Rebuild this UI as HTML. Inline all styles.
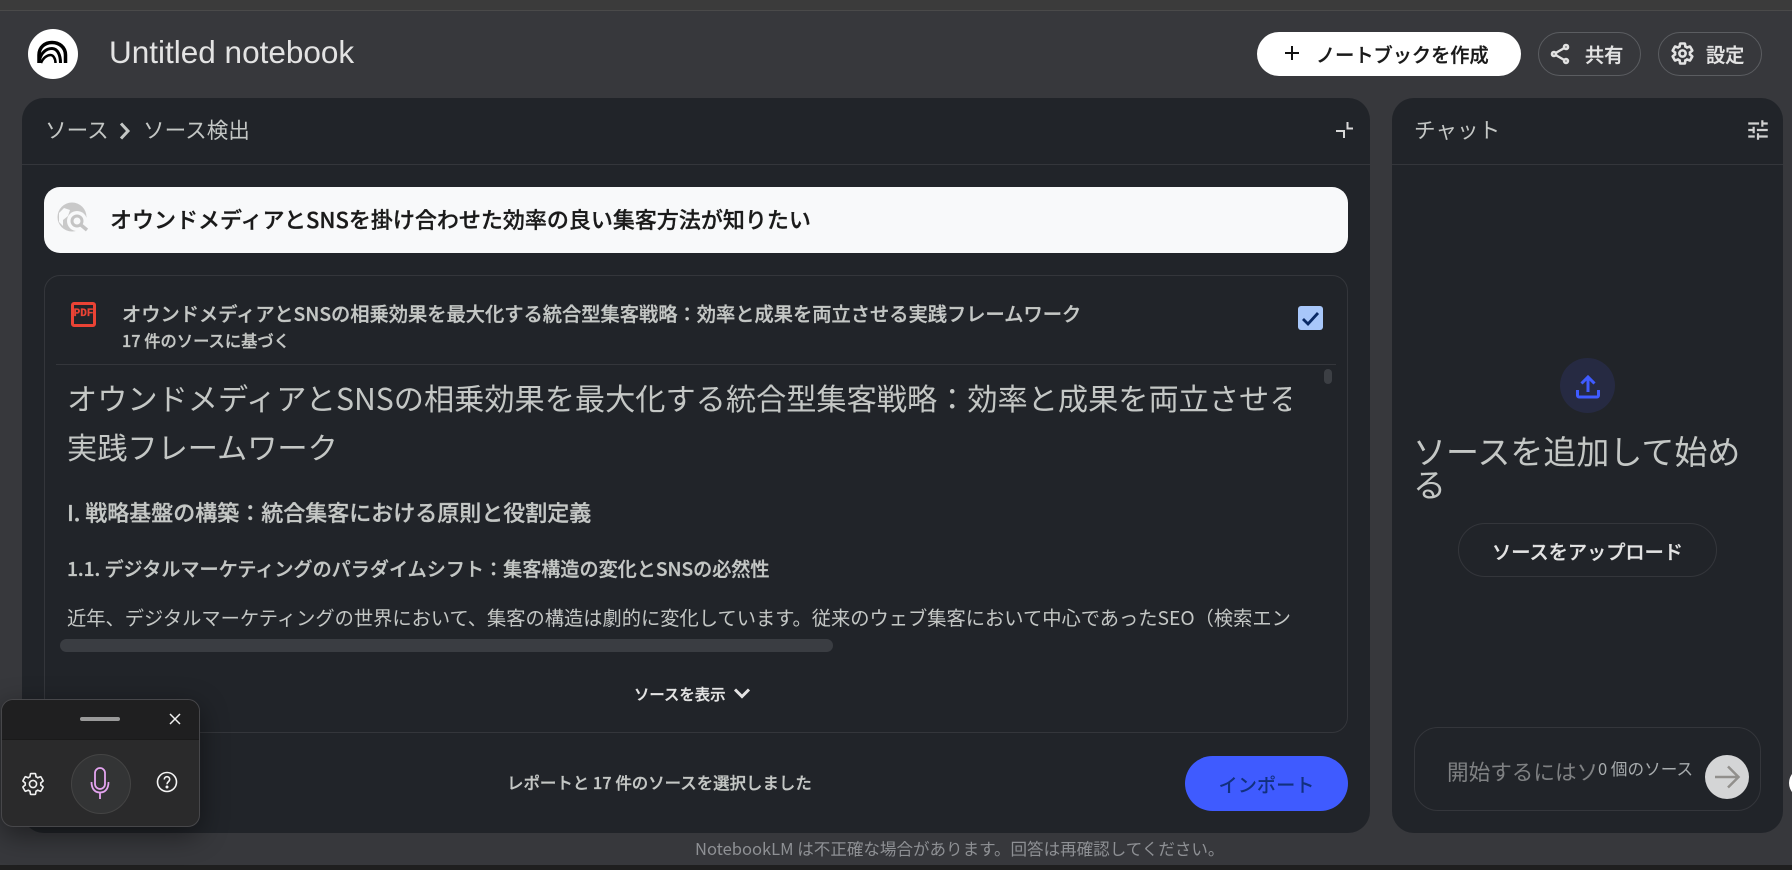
<!DOCTYPE html>
<html lang="ja"><head><meta charset="utf-8"><title>NotebookLM</title>
<style>
*{box-sizing:border-box}
html,body{margin:0;padding:0;width:1792px;height:870px;overflow:hidden;background:#37383c}
body{position:relative;font-family:"Noto Sans CJK JP","Liberation Sans",sans-serif;color:#c4c7c5}
.a{position:absolute;white-space:nowrap}
.m{-webkit-text-stroke:.3px currentColor}
svg{position:absolute;display:block}
.panel{position:absolute;background:#212429;border-radius:22px}
.line{position:absolute;height:1px;background:#34363b}
</style></head><body>
<div class="a" style="left:0;top:0;width:1792px;height:10px;background:#3b3b3b"></div>
<div class="a" style="left:0;top:10px;width:1792px;height:1px;background:#4a4a4a"></div>
<div class="a" style="left:0;top:865px;width:1792px;height:5px;background:#1f1f1f"></div>

<!-- logo -->
<div class="a" style="left:28px;top:29px;width:50px;height:50px;border-radius:50%;background:#fff"></div>
<svg style="left:0;top:0" width="100" height="100" fill="none" stroke="#000"><path d="M39 63V55C39 47 45 42.500 52 42.500S65.500 47 65.500 55V63" stroke-width="3.500"/><path d="M39.500 60C41 53 46 48.500 52 48.500C57.500 48.500 60.500 55 60.500 63" stroke-width="3"/><path d="M41 63C43 58 47 55 50.500 55C53.500 55 55.500 59 55.500 63" stroke-width="2.500"/></svg>
<div class="a" style="left:109px;top:32px;font-family:'Liberation Sans',sans-serif;font-size:31.500px;line-height:40px;color:#e3e3e3">Untitled notebook</div>

<!-- header buttons -->
<div class="a" style="left:1257px;top:32px;width:264px;height:44px;border-radius:22px;background:#fff"></div>
<svg style="left:1283px;top:44px" width="18" height="18" stroke="#111" stroke-width="2"><path d="M9 2V16M2 9H16"/></svg>
<div class="a m" style="left:1316px;top:41px;font-size:19.200px;line-height:27px;font-weight:500;color:#1a1a1a">ノートブックを作成</div>
<div class="a" style="left:1538px;top:32px;width:103px;height:44px;border-radius:22px;border:1px solid #5b5d61"></div>
<svg style="left:1548px;top:42px" width="24" height="24" viewBox="0 0 24 24" fill="#e3e3e3" stroke="#e3e3e3" stroke-width=".6"><path d="M18 16.080c-.76 0-1.440.3-1.960.77L8.910 12.700c.05-.23.09-.46.09-.7s-.04-.47-.09-.7l7.050-4.110c.54.5 1.250.81 2.040.81 1.660 0 3-1.340 3-3s-1.340-3-3-3-3 1.340-3 3c0 .24.04.47.09.7L8.040 9.810C7.500 9.310 6.790 9 6 9c-1.660 0-3 1.340-3 3s1.340 3 3 3c.79 0 1.500-.31 2.040-.81l7.120 4.160c-.05.21-.08.43-.08.65 0 1.610 1.310 2.920 2.920 2.920 1.610 0 2.920-1.310 2.920-2.920s-1.310-2.920-2.920-2.920zM18 4c.55 0 1 .45 1 1s-.45 1-1 1-1-.45-1-1 .45-1 1-1zM6 13c-.55 0-1-.45-1-1s.45-1 1-1 1 .45 1 1-.45 1-1 1zm12 7.020c-.55 0-1-.45-1-1s.45-1 1-1 1 .45 1 1-.45 1-1 1z"/></svg>
<div class="a m" style="left:1585px;top:40px;font-size:19.200px;line-height:28px;font-weight:500;color:#e3e3e3">共有</div>
<div class="a" style="left:1658px;top:32px;width:104px;height:44px;border-radius:22px;border:1px solid #5b5d61"></div>
<svg style="left:1670px;top:41px" width="25" height="25" viewBox="0 0 24 24" fill="none" stroke="#e3e3e3" stroke-width="2.500"><path d="M19.140 12.940c.04-.3.06-.61.06-.94 0-.32-.02-.64-.07-.94l2.030-1.580c.18-.14.23-.41.12-.61l-1.920-3.320c-.12-.22-.37-.29-.59-.22l-2.390.96c-.5-.38-1.030-.7-1.620-.94l-.36-2.540c-.04-.24-.24-.41-.48-.41h-3.840c-.24 0-.43.17-.47.41l-.36 2.540c-.59.24-1.130.57-1.620.94l-2.390-.96c-.22-.08-.47 0-.59.22L2.740 8.870c-.12.21-.08.47.12.61l2.030 1.580c-.05.3-.09.63-.09.94s.02.64.07.94l-2.030 1.580c-.18.14-.23.41-.12.61l1.920 3.320c.12.22.37.29.59.22l2.390-.96c.5.38 1.030.7 1.620.94l.36 2.540c.05.24.24.41.48.41h3.840c.24 0 .44-.17.47-.41l.36-2.540c.59-.24 1.130-.56 1.620-.94l2.390.96c.22.08.47 0 .59-.22l1.920-3.320c.12-.22.07-.47-.12-.61l-2.010-1.580z"/><circle cx="12" cy="12" r="3"/></svg>
<div class="a m" style="left:1706px;top:40px;font-size:19.200px;line-height:28px;font-weight:500;color:#e3e3e3">設定</div>

<!-- left panel -->
<div class="panel" style="left:22px;top:98px;width:1348px;height:735px"></div>
<div class="line" style="left:22px;top:164px;width:1348px"></div>
<div class="a" style="left:45px;top:115px;font-size:21.600px;line-height:30px">ソース</div>
<svg style="left:117px;top:120px" width="18" height="22" fill="none" stroke="#c4c7c5" stroke-width="3"><path d="M4 3.500L11 11L4 18.500"/></svg>
<div class="a" style="left:143px;top:115px;font-size:21.600px;line-height:30px">ソース検出</div>
<svg style="left:1334px;top:120px" width="22" height="20" fill="none" stroke="#d9d9d9" stroke-width="2"><path d="M13.500 2V8.500H19M2 11H10V18"/></svg>

<!-- search bar -->
<div class="a" style="left:44px;top:187px;width:1304px;height:66px;border-radius:16px;background:#f8f9fa"></div>
<svg style="left:50px;top:195px" width="42" height="42"><circle cx="22" cy="22" r="14.500" fill="#c9c9c9"/><path d="M9 18L14 13L20 15L18 21L13 25L13 31L9 27Z" fill="#f8f9fa"/><circle cx="27" cy="26" r="10" fill="#f8f9fa"/><circle cx="27" cy="26" r="5" fill="none" stroke="#c4c4c4" stroke-width="3"/><path d="M31 30L37 35" stroke="#c4c4c4" stroke-width="3.500"/></svg>
<div class="a m" style="left:110px;top:203px;font-size:22px;line-height:32px;font-weight:500;color:#1a1a1a">オウンドメディアとSNSを掛け合わせた効率の良い集客方法が知りたい</div>

<!-- card -->
<div class="a" style="left:44px;top:275px;width:1304px;height:458px;border-radius:16px;border:1px solid #34363b"></div>
<div class="a" style="left:71px;top:302px;width:25px;height:25px;border:3px solid #ea4335;border-radius:3px"></div>
<div class="a m" style="left:71px;top:302px;width:25px;height:25px;font-family:'Liberation Mono',monospace;font-size:11px;line-height:25px;font-weight:700;text-align:center;color:#ea4335">PDF</div>
<div class="a m" style="left:122px;top:299px;font-size:19.250px;line-height:28px;font-weight:500;color:#c4c7c5">オウンドメディアとSNSの相乗効果を最大化する統合型集客戦略：効率と成果を両立させる実践フレームワーク</div>
<div class="a m" style="left:122px;top:328px;font-size:16.300px;line-height:24px;font-weight:500;color:#c4c7c5">17 件のソースに基づく</div>
<div class="a" style="left:1298px;top:306px;width:25px;height:24px;background:#a8c7fa;border-radius:3px"></div>
<svg style="left:1298px;top:306px" width="25" height="24" fill="none" stroke="#0a2a66" stroke-width="2.800"><path d="M5 13L10 18L20 7"/></svg>
<div class="line" style="left:56px;top:364px;width:1280px"></div>
<div class="a" style="left:1324px;top:369px;width:8px;height:15px;border-radius:4px;background:#3c3f44"></div>

<!-- document -->
<div style="position:absolute;left:67px;top:370px;width:1224px;height:264px;overflow:hidden">
<div class="a" style="left:0;top:2px;font-size:30.200px;line-height:50px;font-weight:400;color:#c4c7c5">オウンドメディアとSNSの相乗効果を最大化する統合型集客戦略：効率と成果を両立させる</div>
<div class="a" style="left:0;top:51px;font-size:30.200px;line-height:50px;font-weight:400;color:#c4c7c5">実践フレームワーク</div>
<div class="a m" style="left:0;top:126px;font-size:22px;line-height:32px;font-weight:500;color:#c4c7c5">I. 戦略基盤の構築：統合集客における原則と役割定義</div>
<div class="a m" style="left:0;top:183px;font-size:19.100px;line-height:30px;font-weight:500;color:#c4c7c5">1.1. デジタルマーケティングのパラダイムシフト：集客構造の変化とSNSの必然性</div>
<div class="a" style="left:0;top:232px;font-size:19.260px;line-height:30px;color:#c4c7c5">近年、デジタルマーケティングの世界において、集客の構造は劇的に変化しています。従来のウェブ集客において中心であったSEO（検索エンジン最適化）</div>
</div>
<div class="a" style="left:60px;top:639px;width:773px;height:13px;border-radius:7px;background:#3a3d42"></div>
<div class="a m" style="left:634px;top:683px;font-size:15.400px;line-height:22px;font-weight:500;color:#e3e3e3">ソースを表示</div>
<svg style="left:732px;top:686px" width="20" height="16" fill="none" stroke="#e3e3e3" stroke-width="3"><path d="M3 3.500L10 10.500L17 3.500"/></svg>

<!-- footer of left -->
<div class="a m" style="left:507px;top:770px;font-size:16.450px;line-height:24px;font-weight:500;color:#c4c7c5">レポートと 17 件のソースを選択しました</div>
<div class="a" style="left:1185px;top:756px;width:163px;height:55px;border-radius:28px;background:#3f5bff;text-align:center;font-size:19.200px;line-height:57px;font-weight:500;color:#12307f">インポート</div>

<!-- right panel -->
<div class="panel" style="left:1392px;top:98px;width:391px;height:735px"></div>
<div class="line" style="left:1392px;top:164px;width:391px"></div>
<div class="a" style="left:1414px;top:115px;font-size:21.600px;line-height:30px">チャット</div>
<svg style="left:1745px;top:117px" width="26" height="26" viewBox="0 0 24 24" fill="#d0d0d0"><path d="M3 17v2h6v-2H3zM3 5v2h10V5H3zm10 16v-2h8v-2h-8v-2h-2v6h2zM7 9v2H3v2h4v2h2V9H7zm14 4v-2H11v2h10zm-6-4h2V7h4V5h-4V3h-2v6z"/></svg>
<div class="a" style="left:1560px;top:358px;width:55px;height:55px;border-radius:50%;background:#262a42"></div>
<svg style="left:1574px;top:372px" width="28" height="28" fill="none" stroke="#3f5bff" stroke-width="3"><path d="M14 20V5M7.500 11.500L14 5L20.500 11.500"/><path d="M3.500 18V23.500A1.500 1.500 0 0 0 5 25H23A1.500 1.500 0 0 0 24.500 23.500V18"/></svg>
<div class="a" style="left:1413px;top:434px;font-size:33px;line-height:33px;font-weight:400;color:#c4c7c5">ソースを追加して始め<br>る</div>
<div class="a m" style="left:1458px;top:523px;width:259px;height:54px;border-radius:27px;border:1px solid #34363b;text-align:center;font-size:19.200px;line-height:54px;font-weight:500;color:#e3e3e3">ソースをアップロード</div>

<!-- chat input -->
<div class="a" style="left:1414px;top:727px;width:347px;height:84px;border-radius:24px;border:1px solid #34363b"></div>
<div style="position:absolute;left:1447px;top:754px;width:149px;height:36px;overflow:hidden"><div class="a" style="left:0;top:0;font-size:21.600px;line-height:36px;font-weight:400;color:#7f8183">開始するにはソースを</div></div>
<div class="a" style="left:1598px;top:756px;font-size:16.600px;line-height:24px;color:#a8acae">0 個のソース</div>
<div class="a" style="left:1705px;top:755px;width:44px;height:44px;border-radius:50%;background:#d4d5d6"></div>
<svg style="left:1705px;top:755px" width="44" height="44" fill="none" stroke="#918f8c" stroke-width="2.500"><path d="M10 22H33M23 11.500L33.500 22L23 32.500"/></svg>
<div class="a" style="left:1789px;top:768px;width:30px;height:30px;border-radius:50%;background:#fff"></div>

<!-- disclaimer -->
<div class="a" style="left:695px;top:837px;font-size:16.550px;line-height:22px;color:#8e9094">NotebookLM は不正確な場合があります。回答は再確認してください。</div>

<!-- voice widget -->
<div class="a" style="left:1px;top:699px;width:199px;height:128px;border-radius:12px;border:1px solid #47474a;background:#2a2a2b;overflow:hidden;box-shadow:0 8px 28px rgba(0,0,0,.45)">
<div style="height:40px;background:#1f1f20;border-bottom:1px solid #1a1a1a"></div>
</div>
<div class="a" style="left:80px;top:717px;width:40px;height:4px;border-radius:2px;background:#9a9a9a"></div>
<svg style="left:168px;top:712px" width="14" height="14" fill="none" stroke="#f0f0f0" stroke-width="1.500"><path d="M2 2L12 12M12 2L2 12"/></svg>
<svg style="left:20px;top:771px" width="26" height="26" viewBox="0 0 24 24" fill="none" stroke="#f0f0f0" stroke-width="1.500"><path d="M19.140 12.940c.04-.3.06-.61.06-.94 0-.32-.02-.64-.07-.94l2.030-1.580c.18-.14.23-.41.12-.61l-1.920-3.320c-.12-.22-.37-.29-.59-.22l-2.390.96c-.5-.38-1.030-.7-1.620-.94l-.36-2.540c-.04-.24-.24-.41-.48-.41h-3.840c-.24 0-.43.17-.47.41l-.36 2.540c-.59.24-1.130.57-1.620.94l-2.390-.96c-.22-.08-.47 0-.59.22L2.740 8.870c-.12.21-.08.47.12.61l2.030 1.580c-.05.3-.09.63-.09.94s.02.64.07.94l-2.030 1.580c-.18.14-.23.41-.12.61l1.920 3.320c.12.22.37.29.59.22l2.390-.96c.5.38 1.030.7 1.620.94l.36 2.540c.05.24.24.41.48.41h3.840c.24 0 .44-.17.47-.41l.36-2.540c.59-.24 1.130-.56 1.620-.94l2.390.96c.22.08.47 0 .59-.22l1.920-3.320c.12-.22.07-.47-.12-.61l-2.010-1.580z"/><circle cx="12" cy="12" r="3.300"/></svg>
<div class="a" style="left:71px;top:754px;width:60px;height:60px;border-radius:50%;background:#333435;border:1px solid #444"></div>
<svg style="left:85px;top:766px" width="30" height="36" fill="none" stroke="#e3a3ef" stroke-width="1.800"><rect x="10" y="2" width="10" height="21" rx="5"/><path d="M6.500 16C6.500 23 10 26.500 15 26.500S23.500 23 23.500 16M15 26.500V33"/></svg>
<svg style="left:155px;top:770px" width="24" height="24" fill="none" stroke="#f4f4f4" stroke-width="1.600"><circle cx="12" cy="12" r="9.500"/><path d="M9.300 9.500C9.300 7.800 10.500 6.700 12 6.700S14.700 7.800 14.700 9.400C14.700 11.600 12 11.700 12 14.300"/><circle cx="12" cy="17" r=".7" fill="#f4f4f4"/></svg>
</body></html>
